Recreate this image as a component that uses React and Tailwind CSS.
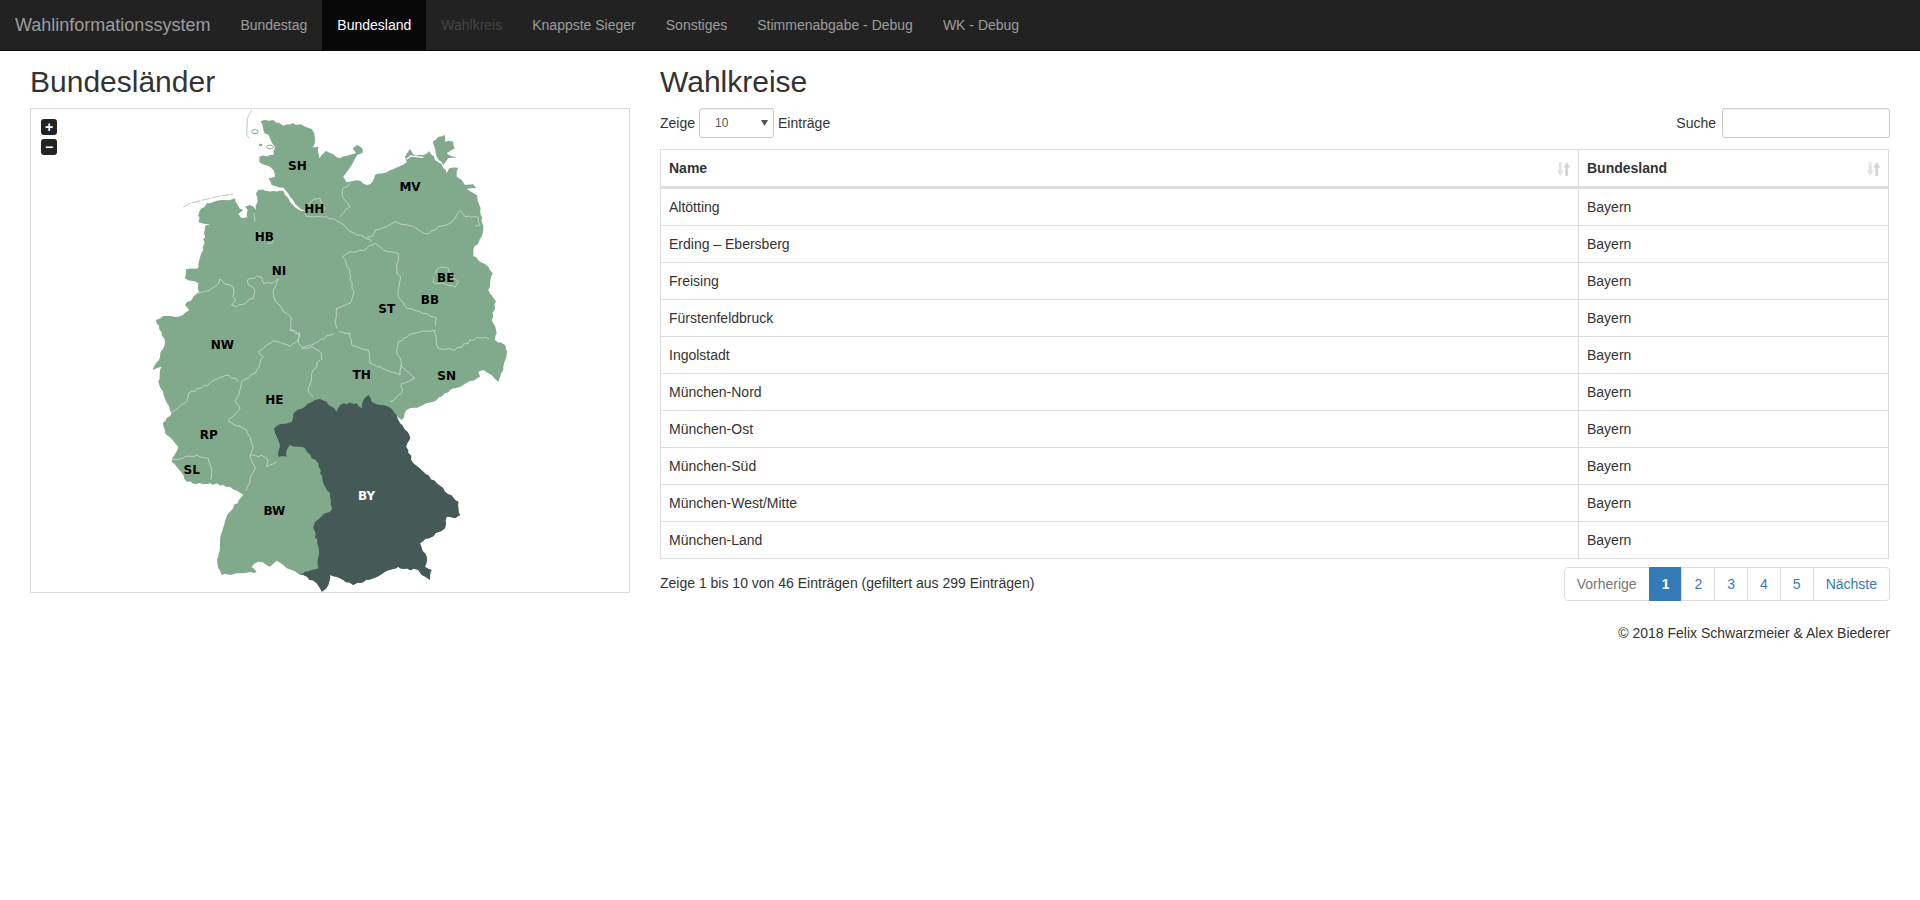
const navItems = [
  { label: "Bundestag" },
  { label: "Bundesland", active: true },
  { label: "Wahlkreis", disabled: true },
  { label: "Knappste Sieger" },
  { label: "Sonstiges" },
  { label: "Stimmenabgabe - Debug" },
  { label: "WK - Debug" },
];

const rows = [
  "Altötting",
  "Erding – Ebersberg",
  "Freising",
  "Fürstenfeldbruck",
  "Ingolstadt",
  "München-Nord",
  "München-Ost",
  "München-Süd",
  "München-West/Mitte",
  "München-Land",
];

const outline =
  "392,63 430,60 460,77 490,70 520,77 545,87 555,115 550,140 533,145 565,140 568,175 588,153 630,175 665,163 678,160 668,145 682,135 698,147 698,158 682,165 668,190 640,230 650,247 680,241 710,255 720,253 735,225 790,208 795,205 830,187 825,170 840,147 850,163 880,165 898,153 915,180 935,193 950,220 958,205 985,203 980,230 995,240 1005,255 1030,253 1038,265 1010,267 1042,287 1048,315 1052,345 1060,385 1055,410 1030,450 1030,468 1075,500 1088,520 1075,570 1098,605 1085,660 1100,700 1095,720 1125,735 1130,765 1120,810 1105,845 1085,825 1060,810 1045,815 1050,830 1000,855 960,870 920,900 880,915 830,930 815,960 800,945 810,970 840,1010 828,1040 850,1090 880,1115 920,1150 945,1175 985,1205 990,1245 975,1255 950,1250 945,1285 870,1330 890,1370 885,1400 905,1410 900,1440 875,1425 865,1410 810,1405 805,1400 730,1435 670,1455 640,1440 600,1425 595,1455 575,1475 560,1450 520,1425 505,1422 470,1405 440,1382 420,1400 385,1385 365,1400 380,1415 340,1420 275,1425 262,1390 270,1320 295,1240 340,1185 300,1160 240,1150 200,1152 170,1145 160,1125 125,1085 145,1040 105,1000 98,970 125,940 105,895 85,845 95,800 68,810 90,770 105,725 78,660 100,648 110,648 145,650 178,630 165,615 207,575 205,550 165,535 168,508 205,505 208,480 220,450 225,378 240,372 205,365 208,335 230,310 315,295 328,325 340,330 325,342 335,355 352,352 353,330 345,320 360,315 378,330 382,295 378,280 385,270 430,273 460,273 480,305 515,333 525,332 505,320 480,290 460,263 425,255 415,233 435,230 430,210 388,187 388,170 430,165 435,140 420,115 400,90";

const bavaria =
  "555,900 570,897 590,905 620,935 640,910 680,910 695,925 700,900 715,885 725,905 775,920 800,945 810,970 840,1010 828,1040 850,1090 880,1115 920,1150 945,1175 985,1205 990,1245 975,1255 950,1250 945,1285 870,1330 890,1370 885,1400 905,1410 900,1440 875,1425 865,1410 810,1405 805,1400 730,1435 670,1455 640,1440 600,1425 595,1455 575,1475 560,1450 520,1425 505,1422 565,1405 565,1340 550,1280 555,1265 585,1240 605,1230 600,1180 580,1150 565,1090 545,1075 525,1045 505,1040 480,1035 470,1050 470,1070 445,1070 450,1040 440,1010 432,985 445,975 485,965 495,935 525,920";

const ruegen = "908,125 925,110 945,105 945,125 970,125 975,145 950,160 980,175 955,175 940,195 920,170 915,145";

const borders = [
  "660,250 638,265 640,295 660,320 640,340 620,362",
  "525,330 530,350 560,350 590,350 620,362 650,385 680,405 700,410 735,430",
  "525,330 530,315 550,298 570,295 582,320 580,345",
  "710,412 730,405 735,390 770,380 795,365 830,375 895,402 925,380 960,370 990,332 1005,350 1045,352 1050,375 1025,382",
  "735,430 760,450 805,462 800,520 812,530 805,590 830,625 870,635 920,655 915,690",
  "735,430 700,452 660,455 638,470 660,510 660,540 672,575 660,610 620,625 615,665 628,695",
  "628,695 660,700 665,735 680,740 715,750 720,790 770,810 810,825 815,795 800,750 805,725 850,700 915,690 920,735 925,745 975,750 1040,712 1090,715",
  "810,795 855,835 815,850 815,880 780,905 775,920",
  "570,780 545,820 535,875 555,900",
  "515,745 545,735 600,705 628,695",
  "205,580 240,570 265,552 270,537 285,552 310,562 308,590 318,600 305,615 320,620 370,595 375,570 355,555 352,540 380,528 395,532 400,550 425,550 445,535 430,570 435,600 455,625 485,655 480,690 510,700 505,720 480,740 430,722 385,755 400,770 375,820 335,845 330,870 315,905 330,925 295,965 350,990 370,1040 360,1070 375,1100 345,1180",
  "480,690 510,705 505,730 520,745 545,740 575,760 575,780 570,780",
  "125,935 170,905 175,880 240,850 295,825 335,850",
  "125,1080 200,1065 235,1075 245,1120 240,1150",
  "360,1065 385,1070 395,1065 415,1080 410,1100 440,1085 445,1070",
  "915,520 930,502 955,505 965,530 985,545 975,562 945,552 910,548 915,520",
  "378,395 392,400 430,420 425,430 400,425",
  "375,365 372,340 385,330",
];

const labels = [
  ["SH", 502, 197],
  ["HH", 553, 326],
  ["MV", 840, 260],
  ["HB", 403, 410],
  ["NI", 447, 512],
  ["BE", 947, 532],
  ["BB", 900, 599],
  ["ST", 770, 626],
  ["NW", 277, 733],
  ["TH", 695, 825],
  ["SN", 950, 826],
  ["HE", 433, 898],
  ["RP", 236, 1004],
  ["SL", 185, 1110],
  ["BW", 433, 1232],
  ["BY", 710, 1187, true],
];

// Subdivide a polyline and nudge its points so borders look hand-drawn like a real map.
function wiggle(str, closed) {
  const pts = str.split(" ").map((p) => p.split(",").map(Number));
  if (closed) pts.push(pts[0]);
  const out = [];
  for (let i = 0; i < pts.length - 1; i++) {
    const [x1, y1] = pts[i];
    const [x2, y2] = pts[i + 1];
    out.push(`${x1},${y1}`);
    const len = Math.hypot(x2 - x1, y2 - y1);
    const n = Math.floor(len / 10);
    for (let k = 1; k < n; k++) {
      const t = k / n;
      const x = x1 + (x2 - x1) * t;
      const y = y1 + (y2 - y1) * t;
      const a = Math.sin(x * 12.9 + y * 78.2) * 2.6;
      const b = Math.sin(x * 39.3 + y * 11.1) * 2.6;
      out.push(`${(x + a).toFixed(1)},${(y + b).toFixed(1)}`);
    }
  }
  return out.join(" ");
}

function GermanyMap() {
  return (
    <svg viewBox="-297 27 1794 1449" className="block w-full h-full">
      <polygon points={wiggle(outline, true)} fill="#81aa8c" />
      <polygon points={wiggle(ruegen, true)} fill="#81aa8c" />
      {borders.map((b, i) => (
        <polyline key={i} points={wiggle(b)} fill="none" stroke="#c8d8cd" strokeWidth="2.5" />
      ))}
      <polygon points={wiggle(bavaria, true)} fill="#455957" />
      <polyline points="365,30 352,55 350,105 358,115" fill="none" stroke="#b5ccbb" strokeWidth="3" />
      <polyline points="160,322 180,310 220,300 260,290 310,282" fill="none" stroke="#b5ccbb" strokeWidth="3" strokeDasharray="26 4" />
      <polyline points="830,178 842,168 880,172" fill="none" stroke="#ffffff" strokeWidth="4" />
      <polyline points="985,210 995,230 1015,240" fill="none" stroke="#ffffff" strokeWidth="3" />
      <ellipse cx="375" cy="95" rx="10" ry="6" fill="#ffffff" stroke="#81aa8c" strokeWidth="3" />
      <ellipse cx="392" cy="135" rx="5" ry="4" fill="#81aa8c" />
      <ellipse cx="420" cy="141" rx="10" ry="6" fill="#ffffff" stroke="#81aa8c" strokeWidth="3" />
      {labels.map(([t, x, y, white]) => (
        <text
          key={t}
          x={x}
          y={y + 13}
          textAnchor="middle"
          fill={white ? "#ffffff" : "#000000"}
          className="font-['DejaVu_Sans'] font-bold text-[36px]"
        >
          {t}
        </text>
      ))}
    </svg>
  );
}

function SortIcon() {
  return (
    <svg viewBox="0 0 14 15" className="absolute right-[8px] top-[12px] w-[13px] h-[14px]">
      <path d="M2,0 h3 v9 h2.2 L3.5,15 L-0.2,9 H2z" fill="#e2e2e2" />
      <path d="M9,15 h3 V6 h2.2 L10.5,0 L6.8,6 H9z" fill="#d4d4d4" />
    </svg>
  );
}

export default function App() {
  return (
    <div className="min-h-[900px] bg-white text-[#333333] text-[14px] leading-[20px] font-['Liberation_Sans',Arial,sans-serif]">
      <nav className="flex h-[51px] bg-[#222222] border-b border-[#080808]">
        <a className="px-[15px] pt-[15px] text-[18px] leading-[20px] text-[#9d9d9d]">Wahlinformationssystem</a>
        <ul className="flex">
          {navItems.map((n) => (
            <li
              key={n.label}
              className={
                n.active
                  ? "px-[15px] py-[15px] bg-[#080808] text-white"
                  : n.disabled
                  ? "px-[15px] py-[15px] text-[#444444]"
                  : "px-[15px] py-[15px] text-[#9d9d9d]"
              }
            >
              {n.label}
            </li>
          ))}
        </ul>
      </nav>

      <main className="flex gap-[30px] px-[30px] pt-[14px]">
        <section className="w-[600px] shrink-0">
          <h2 className="text-[30px] leading-[33px] font-normal mb-[10px]">Bundesländer</h2>
          <div className="relative h-[485px] border border-[#dddddd] overflow-hidden">
            <GermanyMap />
            <div className="absolute left-[10px] top-[10px] flex flex-col gap-[4px]">
              <div className="w-[16px] h-[16px] rounded-[3px] bg-[#222222] text-white flex items-center justify-center font-bold text-[14px] leading-none">+</div>
              <div className="w-[16px] h-[16px] rounded-[3px] bg-[#222222] text-white flex items-center justify-center font-bold text-[14px] leading-none">−</div>
            </div>
          </div>
        </section>

        <section className="flex-1 min-w-0">
          <h2 className="text-[30px] leading-[33px] font-normal mb-[10px]">Wahlkreise</h2>
          <div className="flex justify-between items-center h-[30px]">
            <div className="flex items-center gap-[4px]">
              <span className="-mt-[1px]">Zeige</span>
              <div className="relative w-[75px] h-[30px]">
                <select className="appearance-none w-full h-full pl-[15px] border border-[#cccccc] rounded-[3px] bg-white text-[12px] text-[#555555] shadow-[inset_0_1px_1px_rgba(0,0,0,0.075)]">
                  <option>10</option>
                </select>
                <svg viewBox="0 0 7 6" className="absolute right-[6px] top-[12px] w-[7px] h-[6px]">
                  <polygon points="0,0 7,0 3.5,6" fill="#555555" />
                </svg>
              </div>
              <span className="-mt-[1px]">Einträge</span>
            </div>
            <div className="flex items-center gap-[6px]">
              <span className="-mt-[1px]">Suche</span>
              <input className="w-[168px] h-[30px] border border-[#cccccc] rounded-[3px] bg-white shadow-[inset_0_1px_1px_rgba(0,0,0,0.075)]" />
            </div>
          </div>

          <table className="mt-[11px] w-[1229px] table-fixed border-separate border-spacing-0 border-t border-l border-r border-b border-[#dddddd]">
            <colgroup>
              <col className="w-[917px]" />
              <col />
            </colgroup>
            <thead>
              <tr>
                <th className="relative text-left font-bold p-[8px] h-[38px] border-b-2 border-[#dddddd]">
                  Name
                  <SortIcon />
                </th>
                <th className="relative text-left font-bold p-[8px] border-b-2 border-l border-[#dddddd]">
                  Bundesland
                  <SortIcon />
                </th>
              </tr>
            </thead>
            <tbody>
              {rows.map((r) => (
                <tr key={r}>
                  <td className="p-[8px] border-t border-[#dddddd]">{r}</td>
                  <td className="p-[8px] border-t border-l border-[#dddddd]">Bayern</td>
                </tr>
              ))}
            </tbody>
          </table>

          <div className="flex justify-between items-start mt-[6px]">
            <div className="pt-[8px]">Zeige 1 bis 10 von 46 Einträgen (gefiltert aus 299 Einträgen)</div>
            <div className="flex mt-[2px] mb-[2px]">
              <span className="px-[12px] py-[6px] border border-[#dddddd] rounded-l-[4px] text-[#777777]">Vorherige</span>
              <span className="-ml-px px-[12px] py-[6px] border border-[#337ab7] bg-[#337ab7] text-white font-bold">1</span>
              <span className="-ml-px px-[12px] py-[6px] border border-[#dddddd] text-[#337ab7]">2</span>
              <span className="-ml-px px-[12px] py-[6px] border border-[#dddddd] text-[#337ab7]">3</span>
              <span className="-ml-px px-[12px] py-[6px] border border-[#dddddd] text-[#337ab7]">4</span>
              <span className="-ml-px px-[12px] py-[6px] border border-[#dddddd] text-[#337ab7]">5</span>
              <span className="-ml-px px-[12px] py-[6px] border border-[#dddddd] rounded-r-[4px] text-[#337ab7]">Nächste</span>
            </div>
          </div>
          <footer className="mt-[20px] text-right">© 2018 Felix Schwarzmeier &amp; Alex Biederer</footer>
        </section>
      </main>
    </div>
  );
}
